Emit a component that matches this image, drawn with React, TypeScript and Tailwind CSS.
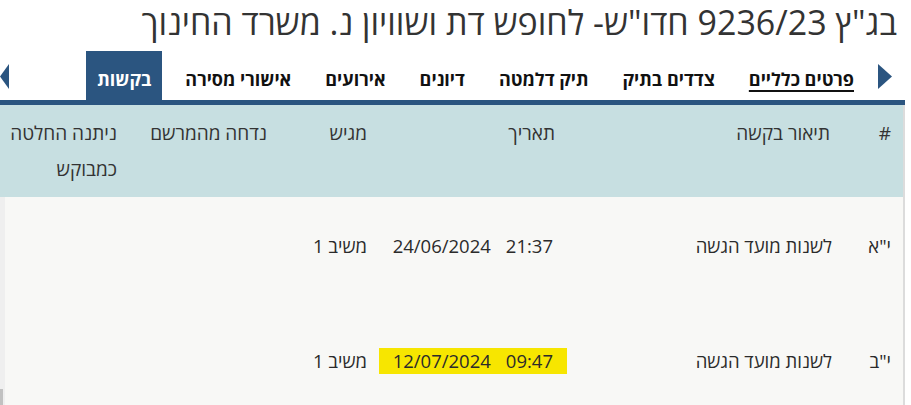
const tabs = [
  { label: "פרטים כלליים", underline: true },
  { label: "צדדים בתיק" },
  { label: "תיק דלמטה" },
  { label: "דיונים" },
  { label: "אירועים" },
  { label: "אישורי מסירה" },
  { label: "בקשות", active: true },
];

const rows = [
  { num: 'י"א', desc: "לשנות מועד הגשה", time: "21:37", date: "24/06/2024", by: "משיב 1", mark: false },
  { num: 'י"ב', desc: "לשנות מועד הגשה", time: "09:47", date: "12/07/2024", by: "משיב 1", mark: true },
];

const cols = "grid grid-cols-[58px_275px_188px_100px_150px_132px]";

export default function App() {
  return (
    <div
      dir="rtl"
      className="h-[405px] w-[911px] overflow-hidden bg-white text-[#2b2b2b] [font-family:'Open_Sans','Noto_Sans',sans-serif]"
    >
      <h1 className="flex h-[51px] items-center pr-[14px] pb-[8px] text-[34px] leading-[42px] font-normal text-[#333]">
        בג"ץ 9236/23 חדו"ש- לחופש דת ושוויון נ. משרד החינוך
      </h1>

      <div className="mr-auto flex h-[54px] w-[905px] items-stretch border-b-[5px] border-[#2b5580]">
        <div className="mr-[13px] ml-[13px] flex items-center pt-[2px]">
          <svg width="14" height="25" viewBox="0 0 14 25">
            <path d="M0 0 L14 12.5 L0 25 Z" fill="#2b5580" />
          </svg>
        </div>
        <nav className="flex items-stretch gap-3">
          {tabs.map((t) => (
            <div
              key={t.label}
              className={
                "flex items-center px-[11px] pt-[8px] text-[18px] font-bold " +
                (t.active ? "bg-[#2b5580] text-white" : "text-[#111]")
              }
            >
              <span className={t.underline ? "underline underline-offset-[4px] decoration-[2px]" : ""}>
                {t.label}
              </span>
            </div>
          ))}
        </nav>
        <div className="mr-auto flex items-center pt-[2px]">
          <svg width="9" height="25" viewBox="0 0 9 25">
            <path d="M9 0 L0 12.5 L9 25 Z" fill="#2b5580" />
          </svg>
        </div>
      </div>

      <div className="mr-auto w-[905px] border-r-2 border-[#dcdcdc]">
        <div className={cols + " bg-[#c7dfe1] py-[10px] text-[19px] leading-[36px] text-[#333]"}>
          <div className="pr-[12px]">#</div>
          <div className="pr-[15px]">תיאור בקשה</div>
          <div className="pr-[15px]">תאריך</div>
          <div className="pr-[15px]">מגיש</div>
          <div className="pr-[15px]">נדחה מהמרשם</div>
          <div className="pr-[15px]">ניתנה החלטה כמבוקש</div>
        </div>

        <div className="relative h-[210px] border-l-[5px] border-[#efefef] bg-[#f8f8f6]">
          {rows.map((r) => (
            <div key={r.num} className={cols + " h-[115px] pt-[36px] text-[18.5px] leading-[26px]"}>
              <div className="pr-[12px]">{r.num}</div>
              <div className="pr-[13px]">{r.desc}</div>
              <div className="pr-[3px]">
                <span
                  dir="ltr"
                  className={"inline-flex gap-[15px] px-[14px] " + (r.mark ? "bg-[#f7e600]" : "")}
                >
                  <span>{r.date}</span>
                  <span>{r.time}</span>
                </span>
              </div>
              <div className="pr-[15px]">{r.by}</div>
              <div />
              <div />
            </div>
          ))}
          <div className="absolute -left-[5px] top-[192px] h-[18px] w-[3px] bg-[#c1c1c1]" />
        </div>
      </div>
    </div>
  );
}
